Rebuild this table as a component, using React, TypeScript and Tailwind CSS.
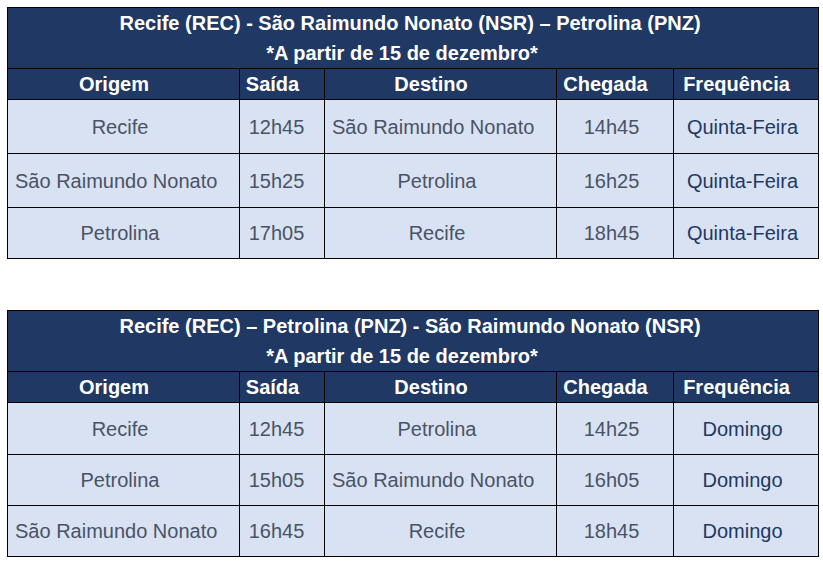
import React from "react";

type Row = [string, string, string, string, string];

const font = { fontFamily: '"Liberation Sans", Arial, sans-serif' };

function Cell({ text, col }: { text: string; col: number }) {
  const isLong = text === "São Raimundo Nonato";
  const color = col === 4 ? "text-[#1f3864]" : "text-[#485366]";
  const pad = col === 1 ? "pr-[11px]" : "pr-[7px]";
  return (
    <td
      className={`border border-black bg-[#d9e2f3] p-0 text-[20px] leading-none ${color} ${
        isLong ? "text-left pl-[7px]" : `text-center ${pad}`
      }`}
    >
      {text}
    </td>
  );
}

function Schedule({
  title,
  rows,
  heights,
}: {
  title: string;
  rows: Row[];
  heights: number[];
}) {
  const headers = ["Origem", "Saída", "Destino", "Chegada", "Frequência"];
  return (
    <table className="table-fixed border-collapse border border-black w-[811px]" style={font}>
      <colgroup>
        <col className="w-[232px]" />
        <col className="w-[85px]" />
        <col className="w-[232px]" />
        <col className="w-[117px]" />
        <col className="w-[145px]" />
      </colgroup>
      <tbody>
        <tr className="h-[61px]">
          <td
            colSpan={5}
            className="border border-black bg-[#203864] p-0 text-center text-white font-bold text-[20px] leading-[30px]"
          >
            <div className="pr-[6px]">{title}</div>
            <div className="pr-[22px]">*A partir de 15 de dezembro*</div>
          </td>
        </tr>
        <tr className="h-[31px]">
          {headers.map((h) => (
            <td
              key={h}
              className="border border-black bg-[#203864] p-0 pr-[19px] text-center text-white font-bold text-[20px] leading-none"
            >
              {h}
            </td>
          ))}
        </tr>
        {rows.map((r, i) => (
          <tr key={i} style={{ height: heights[i] }}>
            {r.map((c, j) => (
              <Cell key={j} text={c} col={j} />
            ))}
          </tr>
        ))}
      </tbody>
    </table>
  );
}

export default function App() {
  return (
    <div className="bg-white w-[823px] h-[562px] pl-[7px] pt-[7px]" style={font}>
      <Schedule
        title="Recife (REC) - São Raimundo Nonato (NSR) – Petrolina (PNZ)"
        heights={[54, 54, 51]}
        rows={[
          ["Recife", "12h45", "São Raimundo Nonato", "14h45", "Quinta-Feira"],
          ["São Raimundo Nonato", "15h25", "Petrolina", "16h25", "Quinta-Feira"],
          ["Petrolina", "17h05", "Recife", "18h45", "Quinta-Feira"],
        ]}
      />
      <div className="h-[51px]" />
      <Schedule
        title="Recife (REC) – Petrolina (PNZ) - São Raimundo Nonato (NSR)"
        heights={[52, 51, 51]}
        rows={[
          ["Recife", "12h45", "Petrolina", "14h25", "Domingo"],
          ["Petrolina", "15h05", "São Raimundo Nonato", "16h05", "Domingo"],
          ["São Raimundo Nonato", "16h45", "Recife", "18h45", "Domingo"],
        ]}
      />
    </div>
  );
}
